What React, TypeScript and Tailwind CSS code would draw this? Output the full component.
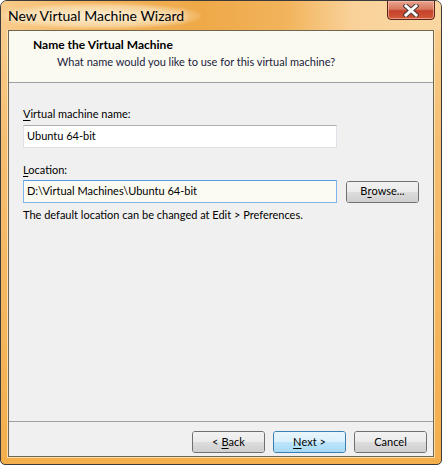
import React from "react";

const font = { fontFamily: 'Lato, "Segoe UI", sans-serif' };

function Btn({ children, def = false }: { children: React.ReactNode; def?: boolean }) {
  return (
    <div
      className={`w-[73px] h-[22px] rounded-[3px] border flex items-center justify-center text-[11px] text-black ${
        def ? "border-[#3c7fb1] shadow-[inset_0_0_0_1px_#a6e4fb]" : "border-[#707070] shadow-[inset_0_0_0_1px_#fbfbfb]"
      }`}
    >
      <div
        className={`w-full h-full rounded-[2px] flex items-center justify-center ${
          def
            ? "bg-[linear-gradient(#eaf6fd_0%,#d9f0fc_50%,#bee6fd_50%,#a7d9f5_100%)]"
            : "bg-[linear-gradient(#f2f2f2_0%,#ebebeb_50%,#dddddd_50%,#cfcfcf_100%)]"
        }`}
      >
        {children}
      </div>
    </div>
  );
}

export default function App() {
  return (
    <div
      className="w-[442px] h-[465px] relative rounded-t-[7px] rounded-b-[5px] border border-[#3b3b3b] bg-[linear-gradient(to_bottom,#f8cf92_0%,#f5bf72_30%,#f4ae4c_100%)] flex flex-col overflow-hidden"
      style={font}
    >
      {/* title bar */}
      <div className="h-[29px] shrink-0 relative bg-[linear-gradient(to_right,#f8cc8c_0%,#f3b662_20%,#eea847_45%,#f2b45c_65%,#f9d29a_80%,#fad7a2_100%)] flex items-center">
        <div className="absolute left-[0px] top-[2px] w-[200px] h-[26px] rounded-full bg-[radial-gradient(ellipse_at_center,rgba(255,246,225,0.85)_0%,rgba(255,240,210,0.5)_55%,rgba(255,240,210,0)_75%)]" />
        <span className="relative pl-[7px] pt-[1px] text-[14px] text-black leading-none [text-shadow:0_0_6px_#fff8e8]">
          New Virtual Machine Wizard
        </span>
        {/* close button */}
        <div className="absolute left-[386px] top-[-1px] w-[48px] h-[20px] rounded-b-[4px] border border-[#5a2418] bg-[linear-gradient(#e8a490_0%,#d8785e_45%,#c4402a_55%,#d45a3a_100%)] shadow-[inset_0_0_0_1px_rgba(255,200,180,0.6)] flex items-center justify-center">
          <svg width="16" height="13" viewBox="0 0 16 13">
            <path d="M3 2 L13 11 M13 2 L3 11" stroke="#4a3a38" strokeWidth="5" strokeLinecap="square" />
            <path d="M3 2 L13 11 M13 2 L3 11" stroke="#ffffff" strokeWidth="3" strokeLinecap="square" />
          </svg>
        </div>
      </div>

      {/* client area */}
      <div className="mx-[7px] mb-[7px] flex-1 border border-[#6f6650] bg-[#f0f0f0] flex flex-col shadow-[0_0_0_1px_rgba(255,240,210,0.7)]">
        {/* header */}
        <div className="h-[52px] shrink-0 bg-[#fbfaf1] border-b border-[#a0a0a0] pl-[24px] pt-[6px]">
          <div className="text-[12px] font-bold text-black leading-[16px]">Name the Virtual Machine</div>
          <div className="text-[11px] text-[#1a1a40] leading-[16px] pl-[24px] pt-[1px]">
            What name would you like to use for this virtual machine?
          </div>
        </div>

        {/* body */}
        <div className="flex-1 px-[14px] pt-[23px] text-[11px] text-black">
          <div className="leading-[16px]">
            <span className="underline underline-offset-2">V</span>irtual machine name:
          </div>
          <div className="mt-[3px] w-[314px] h-[23px] bg-white border border-[#dde1e8] border-t-[#abadb3] flex items-center pl-[3px]">
            Ubuntu 64-bit
          </div>
          <div className="mt-[14px] leading-[16px]">
            <span className="underline underline-offset-2">L</span>ocation:
          </div>
          <div className="mt-[2px] flex items-center gap-[9px]">
            <div className="w-[314px] h-[23px] bg-[#fcfbf1] border border-[#7eb4ea] border-t-[#569de5] flex items-center pl-[3px]">
              D:\Virtual Machines\Ubuntu 64-bit
            </div>
            <Btn>
              B<span className="underline underline-offset-2">r</span>owse...
            </Btn>
          </div>
          <div className="mt-[4px] leading-[16px]">The default location can be changed at Edit &gt; Preferences.</div>
        </div>

        {/* footer */}
        <div className="h-[35px] shrink-0 border-t border-[#a0a0a0] flex items-start justify-end gap-[8px] pr-[6px] pt-[9px]">
          <Btn>
            &lt; <span className="underline underline-offset-2 ml-[3px]">B</span>ack
          </Btn>
          <Btn def>
            <span className="underline underline-offset-2">N</span>ext &gt;
          </Btn>
          <Btn>Cancel</Btn>
        </div>
      </div>
    </div>
  );
}
